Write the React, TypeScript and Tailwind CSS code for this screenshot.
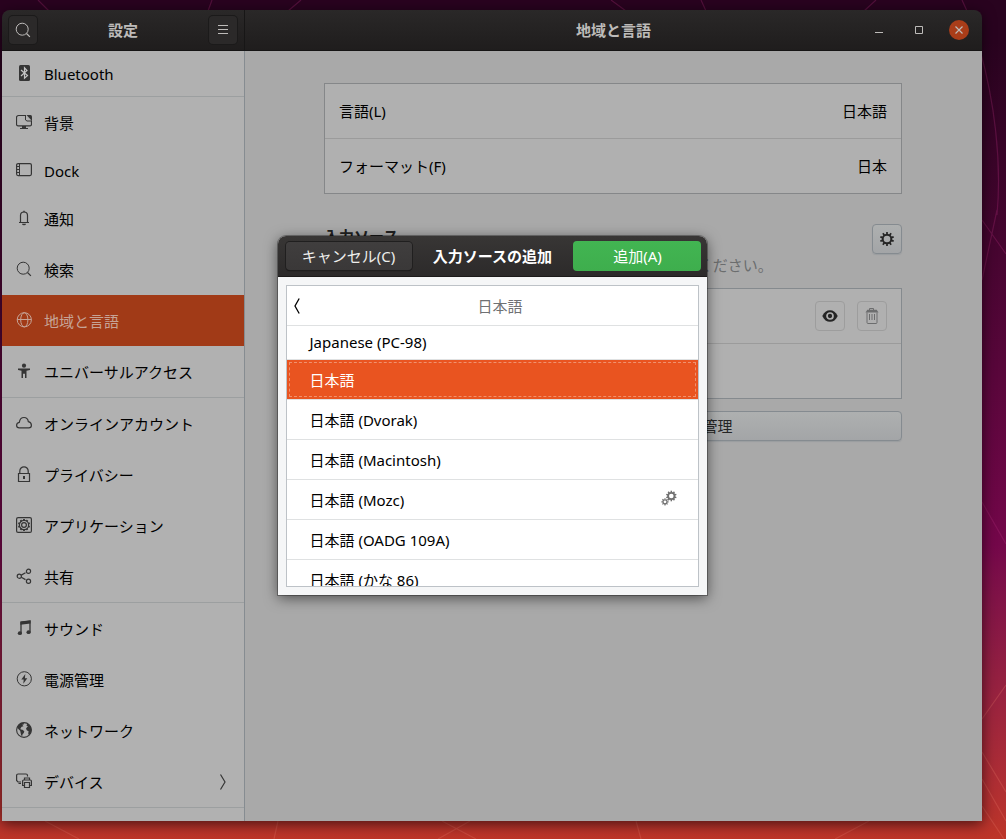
import type { ReactNode } from 'react';
import clsx from 'clsx';

type IconProps = { children: ReactNode; className?: string };

const Icon = ({ children, className }: IconProps) => (
  <svg
    viewBox="0 0 16 16"
    className={clsx('h-4 w-4 shrink-0', className)}
    fill="none"
    stroke="currentColor"
    strokeWidth="1"
    aria-hidden="true"
  >
    {children}
  </svg>
);

const GEAR_TEETH = [0, 36, 72, 108, 144, 180, 216, 252, 288, 324];
const SMALL_GEAR_TEETH = [0, 45, 90, 135, 180, 225, 270, 315];

const SearchIcon = () => (
  <Icon>
    <circle cx="7.2" cy="7.2" r="6" />
    <path d="M11.5 11.5l3.4 3.4" strokeWidth="1.2" />
  </Icon>
);

const icons: Record<string, ReactNode> = {
  bluetooth: (
    <Icon>
      <rect x="3" y="0" width="11" height="16" rx="1.5" fill="currentColor" stroke="none" />
      <path d="M5 5l6.500 5.500L8.500 13.200V2.800L11 5.500 5 11" stroke="#c4c4c4" strokeWidth="1.200" />
    </Icon>
  ),
  background: (
    <Icon>
      <path d="M10 1.500H2.500a2 2 0 0 0-2 2v6.800A1.500 1.500 0 0 0 2 11.800h12a1.500 1.500 0 0 0 1.500-1.500V6.500" strokeWidth="1.200" />
      <path d="M9.500 1.500v4.500l1.500 1h4.500" />
      <path d="M10.500 1h4A1.500 1.500 0 0 1 16 2.500V7z" fill="currentColor" stroke="none" />
      <path d="M6 12h4v2h2v1H4v-1h2z" fill="currentColor" stroke="none" />
    </Icon>
  ),
  dock: (
    <Icon>
      <rect x=".6" y="1.6" width="14.8" height="12" rx="1.5" strokeWidth="1.2" />
      <path d="M3.500 2v11.500M1 4.500h2.500M1 7.500h2.500M1 10.500h2.500" />
    </Icon>
  ),
  bell: (
    <Icon>
      <path d="M4.500 12V5.500a3.500 3.500 0 0 1 7 0V12M3 12.500h10" strokeWidth="1.200" />
      <path d="M6 13.800h4a2 1.500 0 0 1-4 0zM7.300.8h1.400v1.500H7.300z" fill="currentColor" stroke="none" />
    </Icon>
  ),
  search: <SearchIcon />,
  globe: (
    <Icon>
      <circle cx="8.3" cy="7.8" r="7.1" />
      <ellipse cx="8.3" cy="7.8" rx="3.6" ry="7.1" />
      <path d="M1.200 7.500h14.200" />
    </Icon>
  ),
  access: (
    <Icon>
      <circle cx="8" cy="2.7" r="2.1" fill="currentColor" stroke="none" />
      <path d="M2 5.600h12v1.300l-3.500.8V15H9v-4.300H7V15H5.500V7.700L2 6.900z" fill="currentColor" stroke="none" />
    </Icon>
  ),
  cloud: (
    <Icon>
      <path
        d="M3.300 12.900C1.700 12.900.6 11.700.6 10.200c0-1.500 1-2.500 2.700-2.900C3.800 4.200 5.600 2.500 8 2.500c2.700 0 4 1.600 4.300 4.100 1.900.4 3.100 1.800 3.100 3.600 0 1.600-1 2.700-2.600 2.700z"
        strokeWidth="1.2"
      />
    </Icon>
  ),
  lock: (
    <Icon>
      <path d="M2.500 7.500h11v8h-11zM3.800 7.500V5a4.200 4.200 0 0 1 8.400 0v2.500" strokeWidth="1.2" />
      <path d="M7 10h2v3H7z" fill="currentColor" stroke="none" />
    </Icon>
  ),
  apps: (
    <Icon>
      <rect x=".6" y=".6" width="14.8" height="14.8" rx="1.5" strokeWidth="1.2" />
      <circle cx="8" cy="8" r="4.6" strokeWidth="1.2" />
      <circle cx="8" cy="8" r="2.4" strokeWidth="1.2" />
      {GEAR_TEETH.map((angle) => (
        <path key={angle} d="M8 2v1.500" strokeWidth="1.8" transform={`rotate(${angle} 8 8)`} />
      ))}
    </Icon>
  ),
  share: (
    <Icon>
      <circle cx="3.3" cy="8.2" r="2.1" strokeWidth="1.2" />
      <circle cx="12.5" cy="3.3" r="2.1" strokeWidth="1.2" />
      <circle cx="12.5" cy="13.2" r="2.1" strokeWidth="1.2" />
      <path d="M5.300 7.100l4.200-2.300M5.300 9.300l4.200 2.300" strokeWidth="1.2" />
    </Icon>
  ),
  music: (
    <Icon>
      <path d="M5 13V2l9-1v11" strokeWidth="1.3" />
      <path d="M4.400 1.700L14.600.5v3L4.400 4.700z" fill="currentColor" stroke="none" />
      <ellipse cx="3.9" cy="13.2" rx="2.1" ry="1.9" fill="currentColor" stroke="none" />
      <ellipse cx="12.6" cy="12.2" rx="2.1" ry="1.9" fill="currentColor" stroke="none" />
    </Icon>
  ),
  power: (
    <Icon>
      <circle cx="8.3" cy="7.8" r="7.1" />
      <path d="M9.300 3L5.300 8.600h2.400L7.300 12.800l4-5.600H8.900z" fill="currentColor" stroke="none" />
    </Icon>
  ),
  network: (
    <Icon>
      <circle cx="8" cy="8" r="7.4" strokeWidth="1.1" />
      <path
        d="M1.300 4.500C2.500 2.400 4.500.9 7 .8l1.300.9-.8.9-1.300.2 1.300 1.400-1.800.6-1.200 1.400.2 1.200 1.800.4 1.800 1.400-.5 1.900-1.200 1.100-.4 1.800-1-.5-.5-2.200-.5-2.500-1.400-1.300L1.600 6z"
        fill="currentColor"
        stroke="none"
      />
      <path
        d="M10.300 3.300l1.500-1.700c2.300 1.300 3.600 3.600 3.600 6.200 0 2.300-1 4.200-2.500 5.500l-.7-1.700.4-2.300-1.600-.8-1-1.700.9-1.500 1-.8z"
        fill="currentColor"
        stroke="none"
      />
    </Icon>
  ),
  devices: (
    <Icon>
      <path d="M11.500 3.500v-1A1.500 1.500 0 0 0 10 1H2.100A1.500 1.500 0 0 0 .6 2.500v5L2 9h3M2.500 10.500H5" strokeWidth="1.2" />
      <path d="M8.500 7V5h5v2M8 12.500H6.600V8a1 1 0 0 1 1-1h6.800a1 1 0 0 1 1 1v4.500H14" strokeWidth="1.2" />
      <path d="M8.500 9.500h5v5h-5z" strokeWidth="1.2" />
    </Icon>
  ),
};

type NavItem = { icon: string; label: string; latin?: boolean; active?: boolean; more?: boolean };

const navGroups: NavItem[][] = [
  [{ icon: 'bluetooth', label: 'Bluetooth', latin: true }],
  [
    { icon: 'background', label: '背景' },
    { icon: 'dock', label: 'Dock', latin: true },
    { icon: 'bell', label: '通知' },
    { icon: 'search', label: '検索' },
    { icon: 'globe', label: '地域と言語', active: true },
    { icon: 'access', label: 'ユニバーサルアクセス' },
  ],
  [
    { icon: 'cloud', label: 'オンラインアカウント' },
    { icon: 'lock', label: 'プライバシー' },
    { icon: 'apps', label: 'アプリケーション' },
    { icon: 'share', label: '共有' },
  ],
  [
    { icon: 'music', label: 'サウンド' },
    { icon: 'power', label: '電源管理' },
    { icon: 'network', label: 'ネットワーク' },
    { icon: 'devices', label: 'デバイス', more: true },
  ],
];

const layouts = [
  { label: '日本語', selected: true },
  { label: '日本語 (Dvorak)' },
  { label: '日本語 (Macintosh)' },
  { label: '日本語 (Mozc)', engine: true },
  { label: '日本語 (OADG 109A)' },
  { label: '日本語 (かな 86)' },
];

const Wallpaper = () => (
  <svg
    className="absolute inset-0 h-full w-full"
    viewBox="0 0 1006 839"
    preserveAspectRatio="none"
    fill="none"
    aria-hidden="true"
  >
    <g stroke="#b0307a" strokeOpacity=".3" strokeWidth="1.2">
      <path d="M38 0l11 11M212 0l-4 11M301 0l-13 11M611 0l15 11M701 0l5 11M876 0l-12 11M962 0l5 11" />
      <path d="M980 50c14 50 22 110 17 165M997 210l-15 70M982 220l24 34" />
      <path d="M982 502l24 42" />
    </g>
    <g stroke="#f08070" strokeOpacity=".25" strokeWidth="1.2">
      <path d="M982 719l24-34M982 752l24 40M982 779l24 42M982 806l22 33" />
      <path d="M45 821l34 18M278 821l-4 18M442 821l34 18M470 821l-32 18M636 821l5 18M869 821l-34 18" />
    </g>
  </svg>
);

const HeaderButton = ({ label, children }: { label: string; children: ReactNode }) => (
  <button
    type="button"
    aria-label={label}
    className="grid h-7 w-7 place-items-center rounded bg-[#2b2929] text-[#bdbbb9] shadow-[0_0_0_1px_#1b1a1a]"
  >
    {children}
  </button>
);

const Sidebar = () => (
  <nav className="flex w-[243px] shrink-0 flex-col overflow-hidden border-r border-[#868c91] bg-[#b1b1b1]">
    {navGroups.map((group) => (
      <ul key={group[0].label} className="border-b border-[#9c9fa0]">
        {group.map((item) => (
          <li key={item.label}>
            <a
              href="#"
              className={clsx(
                'flex items-center gap-3 px-3.5',
                item.latin ? 'h-[45px]' : 'h-[51px]',
                item.active ? 'bg-[#a13a17] text-[#c6a396]' : 'text-black',
              )}
            >
              <span className={clsx('pb-0.5', !item.active && 'text-[#353535]')}>{icons[item.icon]}</span>
              <span className="flex-1">{item.label}</span>
              {item.more && (
                <Icon className="text-[#353535]">
                  <path d="M6.500.5L11 8l-4.500 7.500" strokeWidth="1.2" />
                </Icon>
              )}
            </a>
          </li>
        ))}
      </ul>
    ))}
  </nav>
);

const GearIcon = () => (
  <Icon>
    <circle cx="8" cy="8" r="4.3" strokeWidth="2" />
    {GEAR_TEETH.map((angle) => (
      <path key={angle} d="M8 1v2.500" strokeWidth="1.7" transform={`rotate(${angle} 8 8)`} />
    ))}
  </Icon>
);

const EngineIcon = () => (
  <Icon className="mb-1 text-[#707070]">
    <circle cx="10.3" cy="6" r="3.2" strokeWidth="1.8" />
    {GEAR_TEETH.map((angle) => (
      <path key={angle} d="M10.300.7v2" strokeWidth="1.5" transform={`rotate(${angle} 10.3 6)`} />
    ))}
    <circle cx="4" cy="11.8" r="2" strokeWidth="1.2" />
    {SMALL_GEAR_TEETH.map((angle) => (
      <path key={angle} d="M4 8.200v1.400" strokeWidth="1.2" transform={`rotate(${angle} 4 11.8)`} />
    ))}
  </Icon>
);

const RegionPanel = () => (
  <main className="min-w-0 flex-1 bg-[#a9a9a9] pt-8 pr-20 pl-[79px] text-black">
    <div className="divide-y divide-[#9b9b9b] border border-[#858789] bg-[#b0b0b0]">
      <button type="button" className="flex h-[55px] w-full items-center justify-between px-3.5">
        <span>言語(L)</span>
        <span>日本語</span>
      </button>
      <button type="button" className="flex h-[54px] w-full items-center justify-between px-3.5">
        <span>フォーマット(F)</span>
        <span>日本</span>
      </button>
    </div>

    <div className="mt-[30px] flex items-start justify-between">
      <div>
        <h2 className="mt-0.5 font-bold text-[#202020]">入力ソース</h2>
        <p className="mt-[9px] text-[#6b6d6e]">キーボードレイアウトやインプットメソッドを選択してください。</p>
      </div>
      <button
        type="button"
        aria-label="オプション"
        className="grid h-[30px] w-[30px] place-items-center rounded border border-[#858b90] bg-linear-to-b from-[#aeb0b0] to-[#a3a5a7] text-[#252525] shadow-[0_1px_1px_#9a9d9f]"
      >
        <GearIcon />
      </button>
    </div>

    <div className="mt-[13px] divide-y divide-[#9b9b9b] border border-[#858a8e] bg-[#b0b0b0]">
      <div className="flex h-[55px] items-center justify-end gap-3 px-3.5">
        <button
          type="button"
          aria-label="表示"
          className="grid h-[30px] w-[30px] place-items-center rounded border border-[#9d9d9d] text-[#252525]"
        >
          <Icon>
            <path
              d="M.3 8C2 4 4.800 2.200 8 2.200S14 4 15.700 8C14 12 11.200 13.800 8 13.800S2 12 .3 8z"
              fill="currentColor"
              stroke="none"
            />
            <circle cx="8" cy="8" r="3" stroke="#b0b0b0" strokeWidth="1.7" />
          </Icon>
        </button>
        <button
          type="button"
          aria-label="削除"
          disabled
          className="grid h-[30px] w-[30px] place-items-center rounded border border-[#9d9d9d] text-[#6c6d6e]"
        >
          <Icon>
            <path d="M3 4.500v10a1 1 0 0 0 1 1h8a1 1 0 0 0 1-1v-10M5.500 2V.5h4V2M5.500 6v6M8 6v6M10.500 6v6" />
            <path d="M1.500 4.500l1.800-2.700h9.400l1.800 2.700z" fill="currentColor" stroke="none" />
          </Icon>
        </button>
      </div>
      <div className="h-[54px]" />
    </div>

    <button
      type="button"
      className="mt-3 h-[30px] w-full rounded border border-[#858b90] bg-linear-to-b from-[#aeb0b0] to-[#a3a5a7] text-[#252525] shadow-[0_1px_1px_#9a9d9f]"
    >
      インストールされている言語の管理
    </button>
  </main>
);

const AddSourceDialog = () => (
  <div className="absolute inset-0 grid place-items-center">
    <section
      role="dialog"
      aria-label="入力ソースの追加"
      className="w-[429px] overflow-hidden rounded-t-lg bg-[#f5f6f7] shadow-[0_0_0_1px_rgba(0,0,0,0.3),0_3px_14px_rgba(0,0,0,0.55)]"
    >
      <header className="flex h-[41px] items-center justify-between border-b border-[#1c1a1a] bg-linear-to-b from-[#383635] to-[#2c2a2a] pr-[5px] pl-2 text-white">
        <button
          type="button"
          className="h-7 w-[126px] rounded bg-linear-to-b from-[#403e3e] to-[#3a3838] text-[#eeeeec] shadow-[0_0_0_1px_#201f1f,0_1px_1px_#111111]"
        >
          キャンセル(C)
        </button>
        <h2 className="font-bold">入力ソースの追加</h2>
        <button type="button" className="h-[30px] w-32 rounded bg-linear-to-b from-[#42b552] to-[#3eae4d]">
          追加(A)
        </button>
      </header>
      <div className="p-2">
        <div className="h-[302px] overflow-hidden border border-[#bdc2c7] bg-white text-black">
          <div className="flex h-10 items-center border-b border-[#dfe1e2] text-[#6f7173]">
            <button type="button" aria-label="戻る" className="w-5 text-black">
              <Icon className="mx-auto">
                <path d="M10.200.5L6 8l4.200 7.500" strokeWidth="1.3" />
              </Icon>
            </button>
            <h3 className="flex-1 pr-1 text-center">日本語</h3>
          </div>
          <ul>
            <li className="h-[34px] border-b border-[#dfe1e2]">
              <button type="button" className="flex h-full w-full items-center px-[23px] pb-0.5 text-left">
                Japanese (PC-98)
              </button>
            </li>
            {layouts.map(({ label, selected, engine }) => (
              <li key={label} className="h-10 border-b border-[#dfe1e2]">
                <button
                  type="button"
                  className={clsx(
                    'flex h-full w-full items-center justify-between pr-[21px] pl-[23px] text-left',
                    selected && 'bg-[#e95420] text-white outline-1 -outline-offset-3 outline-[#f0916e] outline-dashed',
                  )}
                >
                  {label}
                  {engine && <EngineIcon />}
                </button>
              </li>
            ))}
          </ul>
        </div>
      </div>
    </section>
  </div>
);

export default function App() {
  return (
    <div
      lang="ja"
      className="relative flex h-screen bg-linear-to-b from-[#29031f] from-5% via-[#74074a] via-65% to-[#bd3528] pt-2.5 pr-6 pb-[18px] pl-0.5 font-['Noto_Sans','Noto_Sans_CJK_JP',sans-serif] text-[15px] leading-5"
    >
      <Wallpaper />
      <div className="relative flex min-w-0 flex-1 flex-col rounded-t-lg shadow-[0_3px_14px_rgba(0,0,0,0.6)]">
        <header className="flex h-[41px] shrink-0 rounded-t-lg border-b border-[#161515] bg-linear-to-b from-[#2a2828] to-[#1f1d1d] text-[#bdbbb9]">
          <div className="flex w-[243px] shrink-0 items-center justify-between border-r border-[#171616] px-[7px]">
            <HeaderButton label="検索">
              <SearchIcon />
            </HeaderButton>
            <h1 className="font-bold">設定</h1>
            <HeaderButton label="メニュー">
              <Icon>
                <path d="M3 3.500h10M3 7.500h10M3 11.500h10" />
              </Icon>
            </HeaderButton>
          </div>
          <div className="grid flex-1 grid-cols-[1fr_auto_1fr] items-center">
            <h2 className="col-start-2 font-bold">地域と言語</h2>
            <div className="flex justify-end gap-5 pr-[13px]">
              <button type="button" aria-label="最小化" className="grid h-5 w-5 place-items-center">
                <Icon>
                  <path d="M4 10.500h8" />
                </Icon>
              </button>
              <button type="button" aria-label="最大化" className="grid h-5 w-5 place-items-center">
                <Icon>
                  <path d="M4.500 4.500h7v7h-7z" />
                </Icon>
              </button>
              <button
                type="button"
                aria-label="閉じる"
                className="grid h-5 w-5 place-items-center rounded-full bg-[#a93d19]"
              >
                <Icon>
                  <path d="M4.500 4.500l7 7M11.500 4.500l-7 7" strokeWidth="1.2" />
                </Icon>
              </button>
            </div>
          </div>
        </header>
        <div className="flex min-h-0 flex-1">
          <Sidebar />
          <RegionPanel />
        </div>
        <AddSourceDialog />
      </div>
    </div>
  );
}
